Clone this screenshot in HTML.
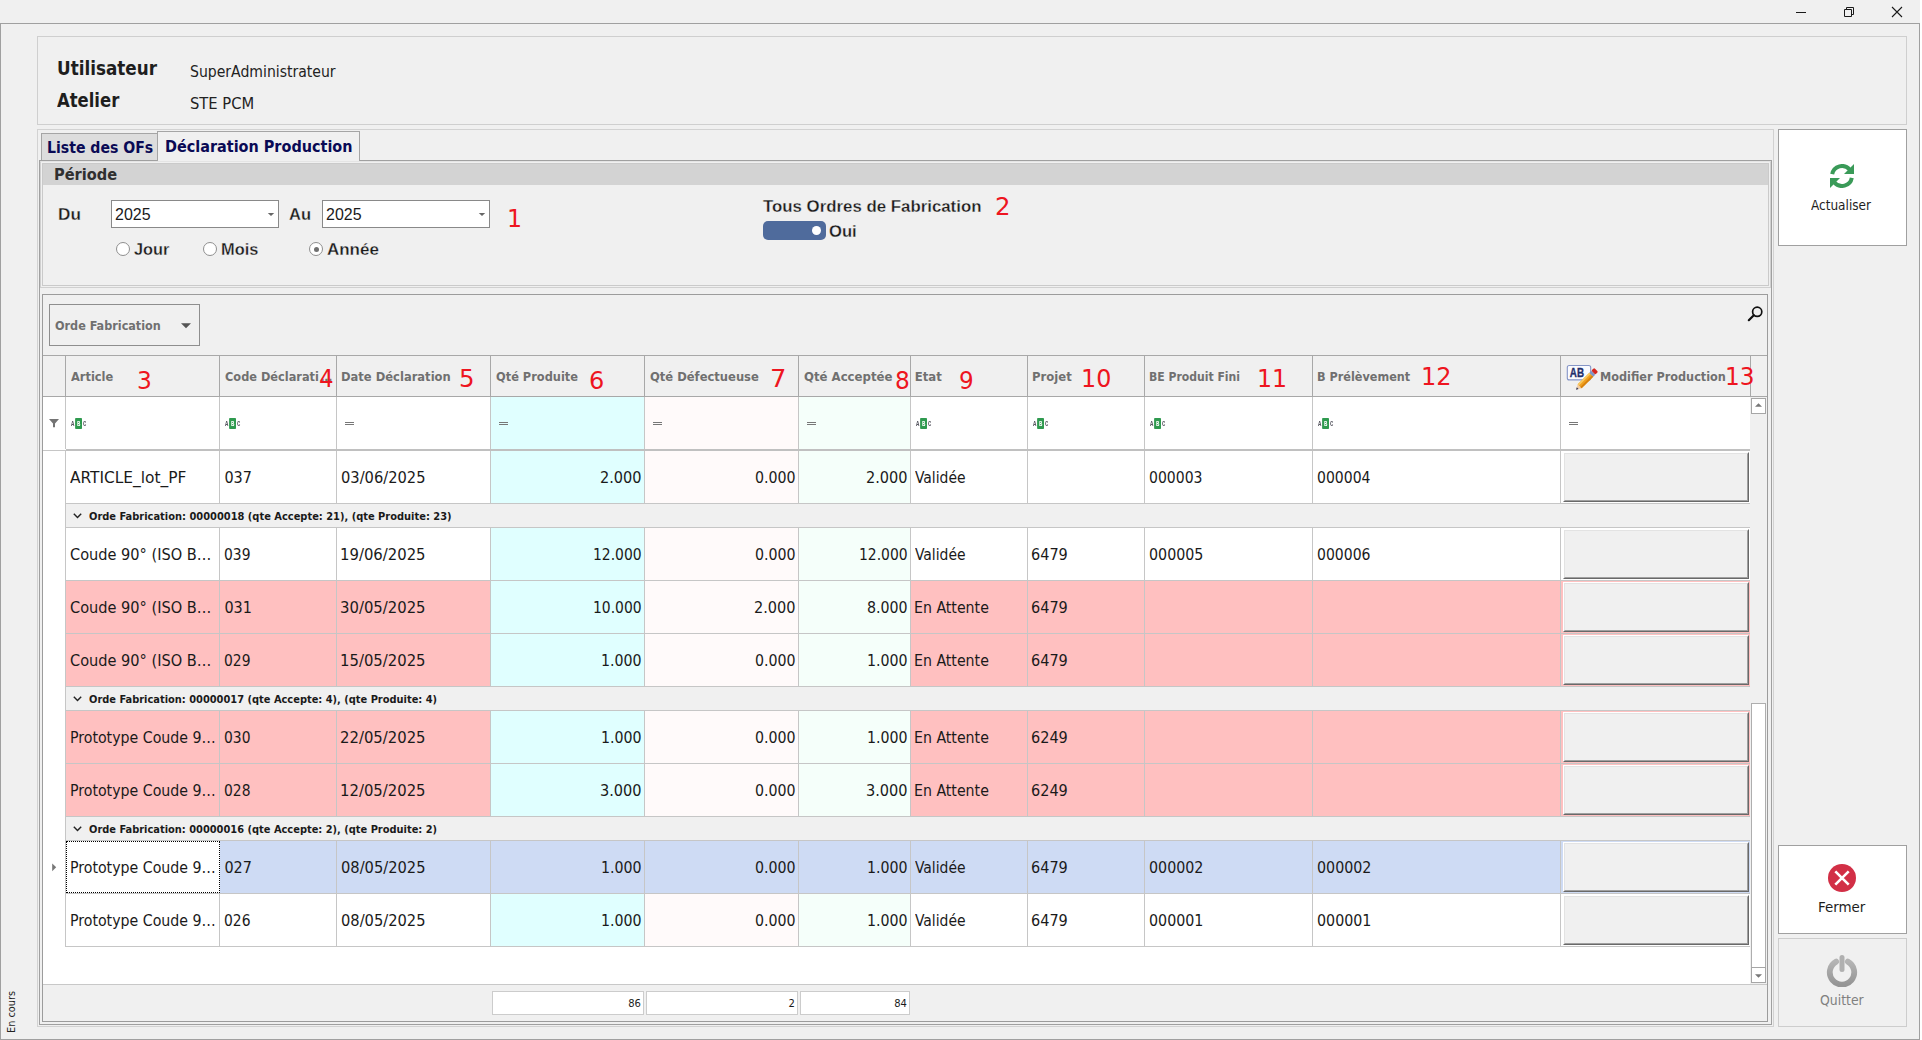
<!DOCTYPE html>
<html lang="fr"><head><meta charset="utf-8"><title>Déclaration Production</title>
<style>
html,body{margin:0;padding:0;background:#fff;}
body{width:1922px;height:1040px;position:relative;overflow:hidden;}
div,span.t,svg{position:absolute;box-sizing:border-box;}
span.t{white-space:pre;line-height:normal;transform-origin:0 0;font-weight:400;font-style:normal;}
span.h{font-family:'DejaVu Sans Condensed','DejaVu Sans',sans-serif;font-stretch:condensed;}
span.a{font-family:'Liberation Sans',sans-serif;}
span.d{font-family:'DejaVu Sans',sans-serif;}
</style></head>
<body>
<div style="left:0px;top:0px;width:1920px;height:1040px;background:#f0f0f0;"></div>
<div style="left:0px;top:23px;width:1920px;height:1px;background:#a0a0a0"></div>
<div style="left:0px;top:23px;width:1px;height:1017px;background:#a0a0a0"></div>
<div style="left:1919px;top:23px;width:1px;height:1017px;background:#a0a0a0"></div>
<div style="left:0px;top:1039px;width:1920px;height:1px;background:#a0a0a0"></div>
<svg style="left:1790px;top:0;width:130px;height:23px" viewBox="0 0 130 23"><path d="M6 12.5H16" stroke="#1a1a1a" stroke-width="1" fill="none"/><path d="M54.5 9.5H61.5V16.5H54.5Z M56.5 9.5V7.5H63.5V14.5H61.5" stroke="#1a1a1a" stroke-width="1" fill="none"/><path d="M102 7L112 17M112 7L102 17" stroke="#1a1a1a" stroke-width="1.1" fill="none"/></svg>
<div style="left:37px;top:36px;width:1870px;height:89px;border:1px solid #cfcfcf;"></div>
<span class="t h" style="left:56.53px;top:57.00px;font-size:19.2px;font-weight:700;color:#1e1e1e;transform:scaleX(0.9737);">Utilisateur</span>
<span class="t h" style="left:57.30px;top:89.00px;font-size:19.2px;font-weight:700;color:#1e1e1e;transform:scaleX(0.9520);">Atelier</span>
<span class="t h" style="left:190.00px;top:61.70px;font-size:16px;color:#222;transform:scaleX(0.9744);">SuperAdministrateur</span>
<span class="t h" style="left:190.00px;top:94.00px;font-size:16px;color:#222;transform:scaleX(1.0220);">STE PCM</span>
<div style="left:37px;top:129px;width:1737px;height:898px;border:1px solid #d2d2d2;"></div>
<div style="left:41px;top:133px;width:118px;height:28px;background:#dddddd;border:1px solid #a5a5a5;"></div>
<div style="left:39px;top:160px;width:1733px;height:865px;border:1px solid #a0a0a0;"></div>
<div style="left:157px;top:131px;width:203px;height:31px;background:#f0f0f0;border:1px solid #a5a5a5;border-bottom:none;"></div>
<span class="t h" style="left:47.04px;top:138.00px;font-size:16.3px;font-weight:700;color:#0a0a55;transform:scaleX(0.9608);">Liste des OFs</span>
<span class="t h" style="left:165.12px;top:137.00px;font-size:16.3px;font-weight:700;color:#0a0a55;transform:scaleX(0.9841);">Déclaration Production</span>
<div style="left:40px;top:161px;width:1731px;height:127px;border:1px solid #d0d0d0;border-top-color:#e4e4e4;"></div>
<div style="left:42px;top:163px;width:1727px;height:123px;border:1px solid #cacaca;"></div>
<div style="left:43px;top:164px;width:1725px;height:21px;background:#d3d3d3;"></div>
<span class="t h" style="left:53.60px;top:164.80px;font-size:16.3px;font-weight:700;color:#303030;transform:scaleX(0.9958);">Période</span>
<span class="t a" style="left:57.87px;top:205.00px;font-size:16.6px;font-weight:700;color:#1a1a1a;transform:scaleX(1.0341);-webkit-text-stroke:0.3px #f0f0f0;">Du</span>
<span class="t a" style="left:289.10px;top:205.00px;font-size:16.6px;font-weight:700;color:#1a1a1a;transform:scaleX(0.9962);-webkit-text-stroke:0.3px #f0f0f0;">Au</span>
<div style="left:111px;top:200px;width:168px;height:28px;background:#fff;border:1px solid #898989;"></div>
<span class="t a" style="left:114.90px;top:205.00px;font-size:16.4px;color:#1a1a1a;transform:scaleX(0.9739);">2025</span>
<svg style="left:267px;top:212px;width:8px;height:5px" viewBox="0 0 8 5"><path d="M0.8 0.9H7.2L4 4.1Z" fill="#666"/></svg>
<div style="left:322px;top:200px;width:168px;height:28px;background:#fff;border:1px solid #898989;"></div>
<span class="t a" style="left:325.90px;top:205.00px;font-size:16.4px;color:#1a1a1a;transform:scaleX(0.9739);">2025</span>
<svg style="left:478px;top:212px;width:8px;height:5px" viewBox="0 0 8 5"><path d="M0.8 0.9H7.2L4 4.1Z" fill="#666"/></svg>
<span class="t d" style="left:506.80px;top:204.00px;font-size:24.6px;color:#ee1520;transform:scaleX(0.9630);">1</span>
<div style="left:115.7px;top:242px;width:14px;height:14px;border-radius:50%;background:#fff;border:1px solid #8f8f8f"></div>
<span class="t a" style="left:133.70px;top:239.80px;font-size:16.6px;font-weight:700;color:#1a1a1a;transform:scaleX(0.9835);-webkit-text-stroke:0.3px #f0f0f0;">Jour</span>
<div style="left:203px;top:242px;width:14px;height:14px;border-radius:50%;background:#fff;border:1px solid #8f8f8f"></div>
<span class="t a" style="left:220.71px;top:239.80px;font-size:16.6px;font-weight:700;color:#1a1a1a;transform:scaleX(0.9872);-webkit-text-stroke:0.3px #f0f0f0;">Mois</span>
<div style="left:309px;top:242px;width:14px;height:14px;border-radius:50%;background:#fff;border:1px solid #8f8f8f"><div style="left:3.5px;top:3.5px;width:5px;height:5px;border-radius:50%;background:#707070"></div></div>
<span class="t a" style="left:327.20px;top:239.80px;font-size:16.6px;font-weight:700;color:#1a1a1a;transform:scaleX(1.0221);-webkit-text-stroke:0.3px #f0f0f0;">Année</span>
<span class="t a" style="left:762.60px;top:196.90px;font-size:16.6px;font-weight:700;color:#1a1a1a;transform:scaleX(1.0139);-webkit-text-stroke:0.3px #f0f0f0;">Tous Ordres de Fabrication</span>
<span class="t d" style="left:994.72px;top:192.00px;font-size:24.6px;color:#ee1520;transform:scaleX(0.9916);">2</span>
<div style="left:763px;top:221px;width:63px;height:19px;background:#4f6b9c;border-radius:5px;"><div style="left:48.5px;top:5px;width:9px;height:9px;border-radius:50%;background:#fff"></div></div>
<span class="t a" style="left:828.90px;top:221.60px;font-size:16.6px;font-weight:700;color:#1a1a1a;transform:scaleX(1.0021);-webkit-text-stroke:0.3px #f0f0f0;">Oui</span>
<div style="left:1778px;top:129px;width:129px;height:117px;background:#fff;border:1px solid #a0a0a0;"></div>
<svg style="left:1830px;top:164px;width:24px;height:24px" viewBox="0 0 24 24"><g fill="none" stroke="#3a9a58" stroke-width="4"><path d="M2.2 10.2A10 10 0 0 1 19.6 5.5"/><path d="M21.8 13.8A10 10 0 0 1 4.4 18.5"/></g><path d="M24 0V10H14Z" fill="#3a9a58"/><path d="M0 24V14H10Z" fill="#3a9a58"/></svg>
<span class="t h" style="left:1811.00px;top:196.80px;font-size:14.2px;color:#1e1e1e;transform:scaleX(0.9483);">Actualiser</span>
<div style="left:1778px;top:845px;width:129px;height:89px;background:#fff;border:1px solid #a0a0a0;"></div>
<svg style="left:1828px;top:864px;width:28px;height:28px" viewBox="0 0 28 28"><circle cx="14" cy="14" r="14" fill="#d22f46"/><path d="M7.3 7.3L20.7 20.7M20.7 7.3L7.3 20.7" stroke="#fff" stroke-width="2.6" fill="none"/></svg>
<span class="t h" style="left:1817.95px;top:898.90px;font-size:14.2px;color:#1e1e1e;transform:scaleX(1.0513);">Fermer</span>
<div style="left:1778px;top:938px;width:129px;height:89px;background:#f0f0f0;border:1px solid #cdcdcd;"></div>
<svg style="left:1826px;top:954px;width:32px;height:33px" viewBox="0 0 32 33"><defs><linearGradient id="pg" x1="0" y1="0" x2="0" y2="1"><stop offset="0" stop-color="#b4b4b4"/><stop offset="1" stop-color="#959595"/></linearGradient></defs><path d="M10.2 7.6A12.2 12.2 0 1 0 21.8 7.6" fill="none" stroke="url(#pg)" stroke-width="5.8" stroke-linecap="round"/><path d="M16 3.5V15.5" stroke="#b0b0b0" stroke-width="5" stroke-linecap="round" fill="none"/></svg>
<span class="t h" style="left:1820.20px;top:991.90px;font-size:14.2px;color:#808080;transform:scaleX(0.9749);">Quitter</span>
<span class="t h" style="left:15.10px;top:1023.20px;font-size:11.1px;color:#222;transform-origin:0 10.00px;transform:rotate(-90deg) scaleX(0.9750);">En cours</span>
<div style="left:42px;top:294px;width:1726px;height:728px;background:#f0f0f0;border:1px solid #9c9c9c;"></div>
<div style="left:49px;top:304px;width:151px;height:42px;background:#f0f0f0;border:1px solid #8e8e8e;"></div>
<span class="t h" style="left:55.10px;top:318.20px;font-size:13px;font-weight:700;color:#707070;transform:scaleX(0.9607);">Orde Fabrication</span>
<svg style="left:181px;top:323px;width:10px;height:6px" viewBox="0 0 10 6"><path d="M0 0.3H10L5 5.3Z" fill="#555"/></svg>
<svg style="left:1747px;top:305px;width:17px;height:17px" viewBox="0 0 17 17"><circle cx="10.2" cy="6.8" r="4.6" fill="none" stroke="#111" stroke-width="1.7"/><path d="M6.8 10.3L1.8 15.2" stroke="#111" stroke-width="2.2" stroke-linecap="round"/></svg>
<div style="left:43px;top:355px;width:1724px;height:1px;background:#a8a8a8"></div>
<div style="left:43px;top:396px;width:1724px;height:1px;background:#a8a8a8"></div>
<div style="left:65px;top:356px;width:1px;height:40px;background:#a8a8a8"></div>
<div style="left:219px;top:356px;width:1px;height:40px;background:#a8a8a8"></div>
<div style="left:336px;top:356px;width:1px;height:40px;background:#a8a8a8"></div>
<div style="left:490px;top:356px;width:1px;height:40px;background:#a8a8a8"></div>
<div style="left:644px;top:356px;width:1px;height:40px;background:#a8a8a8"></div>
<div style="left:798px;top:356px;width:1px;height:40px;background:#a8a8a8"></div>
<div style="left:910px;top:356px;width:1px;height:40px;background:#a8a8a8"></div>
<div style="left:1027px;top:356px;width:1px;height:40px;background:#a8a8a8"></div>
<div style="left:1144px;top:356px;width:1px;height:40px;background:#a8a8a8"></div>
<div style="left:1312px;top:356px;width:1px;height:40px;background:#a8a8a8"></div>
<div style="left:1560px;top:356px;width:1px;height:40px;background:#a8a8a8"></div>
<div style="left:1750px;top:356px;width:1px;height:40px;background:#a8a8a8"></div>
<span class="t h" style="left:70.90px;top:369.20px;font-size:13px;font-weight:700;color:#707070;transform:scaleX(0.9756);">Article</span>
<span class="t h" style="left:224.80px;top:369.20px;font-size:13px;font-weight:700;color:#707070;transform:scaleX(0.9708);">Code Déclarati</span>
<span class="t h" style="left:340.81px;top:369.20px;font-size:13px;font-weight:700;color:#707070;transform:scaleX(0.9858);">Date Déclaration</span>
<span class="t h" style="left:495.70px;top:369.20px;font-size:13px;font-weight:700;color:#707070;transform:scaleX(0.9749);">Qté Produite</span>
<span class="t h" style="left:650.10px;top:369.20px;font-size:13px;font-weight:700;color:#707070;transform:scaleX(0.9875);">Qté Défectueuse</span>
<span class="t h" style="left:803.70px;top:369.20px;font-size:13px;font-weight:700;color:#707070;transform:scaleX(1.0024);">Qté Acceptée</span>
<span class="t h" style="left:914.70px;top:369.20px;font-size:13px;font-weight:700;color:#707070;">Etat</span>
<span class="t h" style="left:1032.11px;top:369.20px;font-size:13px;font-weight:700;color:#707070;transform:scaleX(0.9945);">Projet</span>
<span class="t h" style="left:1149.17px;top:369.20px;font-size:13px;font-weight:700;color:#707070;transform:scaleX(0.9285);">BE Produit Fini</span>
<span class="t h" style="left:1317.14px;top:369.20px;font-size:13px;font-weight:700;color:#707070;transform:scaleX(0.9625);">B Prélèvement</span>
<span class="t h" style="left:1600.34px;top:369.20px;font-size:13px;font-weight:700;color:#707070;transform:scaleX(0.9648);">Modifier Production</span>
<span class="t h" style="left:320.60px;top:369.20px;font-size:13px;font-weight:700;color:#707070;">…</span>
<span class="t d" style="left:136.69px;top:366.00px;font-size:24.6px;color:#ee1520;transform:scaleX(0.9499);">3</span>
<span class="t d" style="left:319.08px;top:364.00px;font-size:24.6px;color:#ee1520;transform:scaleX(0.9316);">4</span>
<span class="t d" style="left:458.61px;top:364.00px;font-size:24.6px;color:#ee1520;transform:scaleX(0.9919);">5</span>
<span class="t d" style="left:588.84px;top:366.00px;font-size:24.6px;color:#ee1520;transform:scaleX(0.9763);">6</span>
<span class="t d" style="left:770.30px;top:364.00px;font-size:24.6px;color:#ee1520;transform:scaleX(1.0521);">7</span>
<span class="t d" style="left:894.89px;top:366.00px;font-size:24.6px;color:#ee1520;transform:scaleX(0.9439);">8</span>
<span class="t d" style="left:959.00px;top:366.00px;font-size:24.6px;color:#ee1520;transform:scaleX(0.9363);">9</span>
<span class="t d" style="left:1080.78px;top:364.00px;font-size:24.6px;color:#ee1520;transform:scaleX(0.9688);">10</span>
<span class="t d" style="left:1256.60px;top:364.00px;font-size:24.6px;color:#ee1520;transform:scaleX(0.9642);">11</span>
<span class="t d" style="left:1420.67px;top:362.00px;font-size:24.6px;color:#ee1520;transform:scaleX(0.9754);">12</span>
<span class="t d" style="left:1724.85px;top:362.00px;font-size:24.6px;color:#ee1520;transform:scaleX(0.9458);">13</span>
<svg style="left:1566px;top:364px;width:33px;height:27px" viewBox="0 0 33 27"><rect x="1.3" y="1.5" width="23.4" height="14.4" rx="2" fill="#fafbff" stroke="#8595c6" stroke-width="1.1"/><text x="3.8" y="13.1" font-family="Liberation Sans,sans-serif" font-weight="700" font-size="12.4" fill="#1f2f6b" stroke="#1f2f6b" stroke-width="0.35" textLength="14.2" lengthAdjust="spacingAndGlyphs">AB</text><g transform="translate(10.1 25.7) rotate(-44.7)"><path d="M0 0L5 -2.8V2.8Z" fill="#f1cda6"/><path d="M0 0L2.2 -1.25V1.25Z" fill="#27305a"/><rect x="5" y="-2.8" width="16.4" height="5.6" fill="#f0a020"/><rect x="5" y="-2.8" width="16.4" height="1.8" fill="#f9c960"/><rect x="5" y="1" width="16.4" height="1.8" fill="#d8820e"/><rect x="21.4" y="-2.8" width="2.8" height="5.6" fill="#7f95c4"/><rect x="24.2" y="-2.8" width="4" height="5.6" rx="1.2" fill="#d4261f"/></g></svg>
<div style="left:43px;top:397px;width:1707px;height:587px;background:#fff;"></div>
<div style="left:1750px;top:397px;width:17px;height:587px;background:#f0f0f0;"></div>
<div style="left:1751px;top:398px;width:15px;height:16px;background:#fff;border:1px solid #a6a6a6;"></div>
<svg style="left:1754px;top:402px;width:9px;height:6px" viewBox="0 0 9 6"><path d="M1 4.8H8L4.5 1.3Z" fill="#777"/></svg>
<div style="left:1751px;top:967px;width:15px;height:16px;background:#fff;border:1px solid #a6a6a6;"></div>
<svg style="left:1754px;top:973px;width:9px;height:6px" viewBox="0 0 9 6"><path d="M1 1.2H8L4.5 4.7Z" fill="#777"/></svg>
<div style="left:1751px;top:703px;width:15px;height:264px;background:#fff;border:1px solid #aeaeae;border-bottom:none;"></div>
<div style="left:491px;top:397px;width:153px;height:52px;background:#e0ffff;"></div>
<div style="left:645px;top:397px;width:153px;height:52px;background:#fffafa;"></div>
<div style="left:799px;top:397px;width:111px;height:52px;background:#f5fffa;"></div>
<div style="left:65px;top:397px;width:1px;height:52px;background:#c6c6c6"></div>
<div style="left:219px;top:397px;width:1px;height:52px;background:#c6c6c6"></div>
<div style="left:336px;top:397px;width:1px;height:52px;background:#c6c6c6"></div>
<div style="left:490px;top:397px;width:1px;height:52px;background:#c6c6c6"></div>
<div style="left:644px;top:397px;width:1px;height:52px;background:#c6c6c6"></div>
<div style="left:798px;top:397px;width:1px;height:52px;background:#c6c6c6"></div>
<div style="left:910px;top:397px;width:1px;height:52px;background:#c6c6c6"></div>
<div style="left:1027px;top:397px;width:1px;height:52px;background:#c6c6c6"></div>
<div style="left:1144px;top:397px;width:1px;height:52px;background:#c6c6c6"></div>
<div style="left:1312px;top:397px;width:1px;height:52px;background:#c6c6c6"></div>
<div style="left:1560px;top:397px;width:1px;height:52px;background:#c6c6c6"></div>
<div style="left:43px;top:450px;width:23px;height:1px;background:#c6c6c6"></div>
<div style="left:66px;top:449px;width:1684px;height:2px;background:#c0c0c0"></div>
<svg style="left:49px;top:419px;width:10px;height:9px" viewBox="0 0 10 9"><path d="M0 0H10L6 4.4V8.3H4V4.4Z" fill="#747474"/></svg>
<svg style="left:70px;top:418px;width:17px;height:11px;will-change:transform" viewBox="0 0 17 11"><rect x="5.1" y="0" width="6.9" height="11" rx="0.8" fill="#2f9a4f"/><g font-family="Liberation Mono,monospace" font-weight="700" font-size="7.6"><text x="0.9" y="8.3" fill="#55555f" textLength="3.3" lengthAdjust="spacingAndGlyphs">A</text><text x="6.9" y="8.3" fill="#fff" textLength="3.3" lengthAdjust="spacingAndGlyphs">B</text><text x="13" y="8.3" fill="#55555f" textLength="3.3" lengthAdjust="spacingAndGlyphs">C</text></g></svg>
<svg style="left:224px;top:418px;width:17px;height:11px;will-change:transform" viewBox="0 0 17 11"><rect x="5.1" y="0" width="6.9" height="11" rx="0.8" fill="#2f9a4f"/><g font-family="Liberation Mono,monospace" font-weight="700" font-size="7.6"><text x="0.9" y="8.3" fill="#55555f" textLength="3.3" lengthAdjust="spacingAndGlyphs">A</text><text x="6.9" y="8.3" fill="#fff" textLength="3.3" lengthAdjust="spacingAndGlyphs">B</text><text x="13" y="8.3" fill="#55555f" textLength="3.3" lengthAdjust="spacingAndGlyphs">C</text></g></svg>
<svg style="left:915px;top:418px;width:17px;height:11px;will-change:transform" viewBox="0 0 17 11"><rect x="5.1" y="0" width="6.9" height="11" rx="0.8" fill="#2f9a4f"/><g font-family="Liberation Mono,monospace" font-weight="700" font-size="7.6"><text x="0.9" y="8.3" fill="#55555f" textLength="3.3" lengthAdjust="spacingAndGlyphs">A</text><text x="6.9" y="8.3" fill="#fff" textLength="3.3" lengthAdjust="spacingAndGlyphs">B</text><text x="13" y="8.3" fill="#55555f" textLength="3.3" lengthAdjust="spacingAndGlyphs">C</text></g></svg>
<svg style="left:1032px;top:418px;width:17px;height:11px;will-change:transform" viewBox="0 0 17 11"><rect x="5.1" y="0" width="6.9" height="11" rx="0.8" fill="#2f9a4f"/><g font-family="Liberation Mono,monospace" font-weight="700" font-size="7.6"><text x="0.9" y="8.3" fill="#55555f" textLength="3.3" lengthAdjust="spacingAndGlyphs">A</text><text x="6.9" y="8.3" fill="#fff" textLength="3.3" lengthAdjust="spacingAndGlyphs">B</text><text x="13" y="8.3" fill="#55555f" textLength="3.3" lengthAdjust="spacingAndGlyphs">C</text></g></svg>
<svg style="left:1149px;top:418px;width:17px;height:11px;will-change:transform" viewBox="0 0 17 11"><rect x="5.1" y="0" width="6.9" height="11" rx="0.8" fill="#2f9a4f"/><g font-family="Liberation Mono,monospace" font-weight="700" font-size="7.6"><text x="0.9" y="8.3" fill="#55555f" textLength="3.3" lengthAdjust="spacingAndGlyphs">A</text><text x="6.9" y="8.3" fill="#fff" textLength="3.3" lengthAdjust="spacingAndGlyphs">B</text><text x="13" y="8.3" fill="#55555f" textLength="3.3" lengthAdjust="spacingAndGlyphs">C</text></g></svg>
<svg style="left:1317px;top:418px;width:17px;height:11px;will-change:transform" viewBox="0 0 17 11"><rect x="5.1" y="0" width="6.9" height="11" rx="0.8" fill="#2f9a4f"/><g font-family="Liberation Mono,monospace" font-weight="700" font-size="7.6"><text x="0.9" y="8.3" fill="#55555f" textLength="3.3" lengthAdjust="spacingAndGlyphs">A</text><text x="6.9" y="8.3" fill="#fff" textLength="3.3" lengthAdjust="spacingAndGlyphs">B</text><text x="13" y="8.3" fill="#55555f" textLength="3.3" lengthAdjust="spacingAndGlyphs">C</text></g></svg>
<div style="left:345px;top:422px;width:9px;height:3px;border-top:1px solid #777;border-bottom:1px solid #777"></div>
<div style="left:499px;top:422px;width:9px;height:3px;border-top:1px solid #777;border-bottom:1px solid #777"></div>
<div style="left:653px;top:422px;width:9px;height:3px;border-top:1px solid #777;border-bottom:1px solid #777"></div>
<div style="left:807px;top:422px;width:9px;height:3px;border-top:1px solid #777;border-bottom:1px solid #777"></div>
<div style="left:1569px;top:422px;width:9px;height:3px;border-top:1px solid #777;border-bottom:1px solid #777"></div>
<div style="left:491px;top:451px;width:153px;height:52px;background:#e0ffff;"></div>
<div style="left:645px;top:451px;width:153px;height:52px;background:#fffafa;"></div>
<div style="left:799px;top:451px;width:111px;height:52px;background:#f5fffa;"></div>
<div style="left:65px;top:451px;width:1px;height:52px;background:#c6c6c6"></div>
<div style="left:219px;top:451px;width:1px;height:52px;background:#c6c6c6"></div>
<div style="left:336px;top:451px;width:1px;height:52px;background:#c6c6c6"></div>
<div style="left:490px;top:451px;width:1px;height:52px;background:#c6c6c6"></div>
<div style="left:644px;top:451px;width:1px;height:52px;background:#c6c6c6"></div>
<div style="left:798px;top:451px;width:1px;height:52px;background:#c6c6c6"></div>
<div style="left:910px;top:451px;width:1px;height:52px;background:#c6c6c6"></div>
<div style="left:1027px;top:451px;width:1px;height:52px;background:#c6c6c6"></div>
<div style="left:1144px;top:451px;width:1px;height:52px;background:#c6c6c6"></div>
<div style="left:1312px;top:451px;width:1px;height:52px;background:#c6c6c6"></div>
<div style="left:1560px;top:451px;width:1px;height:52px;background:#c6c6c6"></div>
<div style="left:65px;top:503px;width:1685px;height:1px;background:#c6c6c6"></div>
<span class="t h" style="left:70.40px;top:468.00px;font-size:16px;color:#1a1a1a;transform:scaleX(1.0702);">ARTICLE_lot_PF</span>
<span class="t h" style="left:224.40px;top:468.00px;font-size:16px;color:#1a1a1a;">037</span>
<span class="t h" style="left:341.40px;top:468.00px;font-size:16px;color:#1a1a1a;transform:scaleX(1.0184);">03/06/2025</span>
<span class="t h" style="left:599.69px;top:468.00px;font-size:16px;color:#1a1a1a;transform:scaleX(1.0090);">2.000</span>
<span class="t h" style="left:754.70px;top:468.00px;font-size:16px;color:#1a1a1a;transform:scaleX(0.9844);">0.000</span>
<span class="t h" style="left:865.69px;top:468.00px;font-size:16px;color:#1a1a1a;transform:scaleX(1.0090);">2.000</span>
<span class="t h" style="left:915.40px;top:468.00px;font-size:16px;color:#1a1a1a;transform:scaleX(0.9672);">Validée</span>
<span class="t h" style="left:1149.40px;top:468.00px;font-size:16px;color:#1a1a1a;transform:scaleX(0.9730);">000003</span>
<span class="t h" style="left:1317.40px;top:468.00px;font-size:16px;color:#1a1a1a;transform:scaleX(0.9730);">000004</span>
<div style="left:1563px;top:452px;width:186px;height:50px;background:#f0f0f0;border-top:1px solid #fff;border-left:1px solid #fff;border-right:1px solid #696969;border-bottom:1px solid #696969;"><div style="left:0;top:0;width:184px;height:48px;border-top:1px solid #e3e3e3;border-left:1px solid #e3e3e3;border-right:1px solid #a0a0a0;border-bottom:1px solid #a0a0a0"></div></div>
<div style="left:66px;top:504px;width:1684px;height:23px;background:#f0f0f0;"></div>
<div style="left:66px;top:527px;width:1684px;height:1px;background:#c6c6c6"></div>
<svg style="left:73px;top:513px;width:9px;height:6px" viewBox="0 0 9 6"><path d="M0.8 0.8L4.5 4.6L8.2 0.8" fill="none" stroke="#222" stroke-width="1.4"/></svg>
<span class="t h" style="left:88.90px;top:510.00px;font-size:10.9px;font-weight:700;color:#1a1a1a;transform:scaleX(1.0082);">Orde Fabrication: 00000018 (qte Accepte: 21), (qte Produite: 23)</span>
<div style="left:491px;top:528px;width:153px;height:52px;background:#e0ffff;"></div>
<div style="left:645px;top:528px;width:153px;height:52px;background:#fffafa;"></div>
<div style="left:799px;top:528px;width:111px;height:52px;background:#f5fffa;"></div>
<div style="left:65px;top:528px;width:1px;height:52px;background:#c6c6c6"></div>
<div style="left:219px;top:528px;width:1px;height:52px;background:#c6c6c6"></div>
<div style="left:336px;top:528px;width:1px;height:52px;background:#c6c6c6"></div>
<div style="left:490px;top:528px;width:1px;height:52px;background:#c6c6c6"></div>
<div style="left:644px;top:528px;width:1px;height:52px;background:#c6c6c6"></div>
<div style="left:798px;top:528px;width:1px;height:52px;background:#c6c6c6"></div>
<div style="left:910px;top:528px;width:1px;height:52px;background:#c6c6c6"></div>
<div style="left:1027px;top:528px;width:1px;height:52px;background:#c6c6c6"></div>
<div style="left:1144px;top:528px;width:1px;height:52px;background:#c6c6c6"></div>
<div style="left:1312px;top:528px;width:1px;height:52px;background:#c6c6c6"></div>
<div style="left:1560px;top:528px;width:1px;height:52px;background:#c6c6c6"></div>
<div style="left:65px;top:580px;width:1685px;height:1px;background:#c6c6c6"></div>
<span class="t h" style="left:70.40px;top:545.00px;font-size:16px;color:#1a1a1a;transform:scaleX(1.0108);">Coude 90° (ISO B…</span>
<span class="t h" style="left:224.40px;top:545.00px;font-size:16px;color:#1a1a1a;transform:scaleX(0.9629);">039</span>
<span class="t h" style="left:340.37px;top:545.00px;font-size:16px;color:#1a1a1a;transform:scaleX(1.0310);">19/06/2025</span>
<span class="t h" style="left:592.63px;top:545.00px;font-size:16px;color:#1a1a1a;transform:scaleX(0.9655);">12.000</span>
<span class="t h" style="left:754.70px;top:545.00px;font-size:16px;color:#1a1a1a;transform:scaleX(0.9844);">0.000</span>
<span class="t h" style="left:858.63px;top:545.00px;font-size:16px;color:#1a1a1a;transform:scaleX(0.9655);">12.000</span>
<span class="t h" style="left:915.40px;top:545.00px;font-size:16px;color:#1a1a1a;transform:scaleX(0.9672);">Validée</span>
<span class="t h" style="left:1031.40px;top:545.00px;font-size:16px;color:#1a1a1a;transform:scaleX(1.0037);">6479</span>
<span class="t h" style="left:1149.40px;top:545.00px;font-size:16px;color:#1a1a1a;transform:scaleX(0.9911);">000005</span>
<span class="t h" style="left:1317.40px;top:545.00px;font-size:16px;color:#1a1a1a;transform:scaleX(0.9730);">000006</span>
<div style="left:1563px;top:529px;width:186px;height:50px;background:#f0f0f0;border-top:1px solid #fff;border-left:1px solid #fff;border-right:1px solid #696969;border-bottom:1px solid #696969;"><div style="left:0;top:0;width:184px;height:48px;border-top:1px solid #e3e3e3;border-left:1px solid #e3e3e3;border-right:1px solid #a0a0a0;border-bottom:1px solid #a0a0a0"></div></div>
<div style="left:66px;top:581px;width:153px;height:52px;background:#ffc0c0;"></div>
<div style="left:220px;top:581px;width:116px;height:52px;background:#ffc0c0;"></div>
<div style="left:337px;top:581px;width:153px;height:52px;background:#ffc0c0;"></div>
<div style="left:491px;top:581px;width:153px;height:52px;background:#e0ffff;"></div>
<div style="left:645px;top:581px;width:153px;height:52px;background:#fffafa;"></div>
<div style="left:799px;top:581px;width:111px;height:52px;background:#f5fffa;"></div>
<div style="left:911px;top:581px;width:116px;height:52px;background:#ffc0c0;"></div>
<div style="left:1028px;top:581px;width:116px;height:52px;background:#ffc0c0;"></div>
<div style="left:1145px;top:581px;width:167px;height:52px;background:#ffc0c0;"></div>
<div style="left:1313px;top:581px;width:247px;height:52px;background:#ffc0c0;"></div>
<div style="left:1561px;top:581px;width:189px;height:52px;background:#ffc0c0;"></div>
<div style="left:65px;top:581px;width:1px;height:52px;background:#c6c6c6"></div>
<div style="left:219px;top:581px;width:1px;height:52px;background:#c6c6c6"></div>
<div style="left:336px;top:581px;width:1px;height:52px;background:#c6c6c6"></div>
<div style="left:490px;top:581px;width:1px;height:52px;background:#c6c6c6"></div>
<div style="left:644px;top:581px;width:1px;height:52px;background:#c6c6c6"></div>
<div style="left:798px;top:581px;width:1px;height:52px;background:#c6c6c6"></div>
<div style="left:910px;top:581px;width:1px;height:52px;background:#c6c6c6"></div>
<div style="left:1027px;top:581px;width:1px;height:52px;background:#c6c6c6"></div>
<div style="left:1144px;top:581px;width:1px;height:52px;background:#c6c6c6"></div>
<div style="left:1312px;top:581px;width:1px;height:52px;background:#c6c6c6"></div>
<div style="left:1560px;top:581px;width:1px;height:52px;background:#c6c6c6"></div>
<div style="left:65px;top:633px;width:1685px;height:1px;background:#c6c6c6"></div>
<span class="t h" style="left:70.40px;top:598.00px;font-size:16px;color:#1a1a1a;transform:scaleX(1.0108);">Coude 90° (ISO B…</span>
<span class="t h" style="left:224.40px;top:598.00px;font-size:16px;color:#1a1a1a;">031</span>
<span class="t h" style="left:340.37px;top:598.00px;font-size:16px;color:#1a1a1a;transform:scaleX(1.0310);">30/05/2025</span>
<span class="t h" style="left:592.63px;top:598.00px;font-size:16px;color:#1a1a1a;transform:scaleX(0.9655);">10.000</span>
<span class="t h" style="left:753.69px;top:598.00px;font-size:16px;color:#1a1a1a;transform:scaleX(1.0090);">2.000</span>
<span class="t h" style="left:866.70px;top:598.00px;font-size:16px;color:#1a1a1a;transform:scaleX(0.9844);">8.000</span>
<span class="t h" style="left:914.42px;top:598.00px;font-size:16px;color:#1a1a1a;transform:scaleX(0.9833);">En Attente</span>
<span class="t h" style="left:1031.40px;top:598.00px;font-size:16px;color:#1a1a1a;transform:scaleX(1.0037);">6479</span>
<div style="left:1563px;top:582px;width:186px;height:50px;background:#f0f0f0;border-top:1px solid #fff;border-left:1px solid #fff;border-right:1px solid #696969;border-bottom:1px solid #696969;"><div style="left:0;top:0;width:184px;height:48px;border-top:1px solid #e3e3e3;border-left:1px solid #e3e3e3;border-right:1px solid #a0a0a0;border-bottom:1px solid #a0a0a0"></div></div>
<div style="left:66px;top:634px;width:153px;height:52px;background:#ffc0c0;"></div>
<div style="left:220px;top:634px;width:116px;height:52px;background:#ffc0c0;"></div>
<div style="left:337px;top:634px;width:153px;height:52px;background:#ffc0c0;"></div>
<div style="left:491px;top:634px;width:153px;height:52px;background:#e0ffff;"></div>
<div style="left:645px;top:634px;width:153px;height:52px;background:#fffafa;"></div>
<div style="left:799px;top:634px;width:111px;height:52px;background:#f5fffa;"></div>
<div style="left:911px;top:634px;width:116px;height:52px;background:#ffc0c0;"></div>
<div style="left:1028px;top:634px;width:116px;height:52px;background:#ffc0c0;"></div>
<div style="left:1145px;top:634px;width:167px;height:52px;background:#ffc0c0;"></div>
<div style="left:1313px;top:634px;width:247px;height:52px;background:#ffc0c0;"></div>
<div style="left:1561px;top:634px;width:189px;height:52px;background:#ffc0c0;"></div>
<div style="left:65px;top:634px;width:1px;height:52px;background:#c6c6c6"></div>
<div style="left:219px;top:634px;width:1px;height:52px;background:#c6c6c6"></div>
<div style="left:336px;top:634px;width:1px;height:52px;background:#c6c6c6"></div>
<div style="left:490px;top:634px;width:1px;height:52px;background:#c6c6c6"></div>
<div style="left:644px;top:634px;width:1px;height:52px;background:#c6c6c6"></div>
<div style="left:798px;top:634px;width:1px;height:52px;background:#c6c6c6"></div>
<div style="left:910px;top:634px;width:1px;height:52px;background:#c6c6c6"></div>
<div style="left:1027px;top:634px;width:1px;height:52px;background:#c6c6c6"></div>
<div style="left:1144px;top:634px;width:1px;height:52px;background:#c6c6c6"></div>
<div style="left:1312px;top:634px;width:1px;height:52px;background:#c6c6c6"></div>
<div style="left:1560px;top:634px;width:1px;height:52px;background:#c6c6c6"></div>
<div style="left:65px;top:686px;width:1685px;height:1px;background:#c6c6c6"></div>
<span class="t h" style="left:70.40px;top:651.00px;font-size:16px;color:#1a1a1a;transform:scaleX(1.0108);">Coude 90° (ISO B…</span>
<span class="t h" style="left:224.40px;top:651.00px;font-size:16px;color:#1a1a1a;transform:scaleX(0.9629);">029</span>
<span class="t h" style="left:340.37px;top:651.00px;font-size:16px;color:#1a1a1a;transform:scaleX(1.0310);">15/05/2025</span>
<span class="t h" style="left:600.72px;top:651.00px;font-size:16px;color:#1a1a1a;transform:scaleX(0.9840);">1.000</span>
<span class="t h" style="left:754.70px;top:651.00px;font-size:16px;color:#1a1a1a;transform:scaleX(0.9844);">0.000</span>
<span class="t h" style="left:866.72px;top:651.00px;font-size:16px;color:#1a1a1a;transform:scaleX(0.9840);">1.000</span>
<span class="t h" style="left:914.42px;top:651.00px;font-size:16px;color:#1a1a1a;transform:scaleX(0.9833);">En Attente</span>
<span class="t h" style="left:1031.40px;top:651.00px;font-size:16px;color:#1a1a1a;transform:scaleX(1.0037);">6479</span>
<div style="left:1563px;top:635px;width:186px;height:50px;background:#f0f0f0;border-top:1px solid #fff;border-left:1px solid #fff;border-right:1px solid #696969;border-bottom:1px solid #696969;"><div style="left:0;top:0;width:184px;height:48px;border-top:1px solid #e3e3e3;border-left:1px solid #e3e3e3;border-right:1px solid #a0a0a0;border-bottom:1px solid #a0a0a0"></div></div>
<div style="left:66px;top:687px;width:1684px;height:23px;background:#f0f0f0;"></div>
<div style="left:66px;top:710px;width:1684px;height:1px;background:#c6c6c6"></div>
<svg style="left:73px;top:696px;width:9px;height:6px" viewBox="0 0 9 6"><path d="M0.8 0.8L4.5 4.6L8.2 0.8" fill="none" stroke="#222" stroke-width="1.4"/></svg>
<span class="t h" style="left:88.90px;top:693.00px;font-size:10.9px;font-weight:700;color:#1a1a1a;transform:scaleX(1.0060);">Orde Fabrication: 00000017 (qte Accepte: 4), (qte Produite: 4)</span>
<div style="left:66px;top:711px;width:153px;height:52px;background:#ffc0c0;"></div>
<div style="left:220px;top:711px;width:116px;height:52px;background:#ffc0c0;"></div>
<div style="left:337px;top:711px;width:153px;height:52px;background:#ffc0c0;"></div>
<div style="left:491px;top:711px;width:153px;height:52px;background:#e0ffff;"></div>
<div style="left:645px;top:711px;width:153px;height:52px;background:#fffafa;"></div>
<div style="left:799px;top:711px;width:111px;height:52px;background:#f5fffa;"></div>
<div style="left:911px;top:711px;width:116px;height:52px;background:#ffc0c0;"></div>
<div style="left:1028px;top:711px;width:116px;height:52px;background:#ffc0c0;"></div>
<div style="left:1145px;top:711px;width:167px;height:52px;background:#ffc0c0;"></div>
<div style="left:1313px;top:711px;width:247px;height:52px;background:#ffc0c0;"></div>
<div style="left:1561px;top:711px;width:189px;height:52px;background:#ffc0c0;"></div>
<div style="left:65px;top:711px;width:1px;height:52px;background:#c6c6c6"></div>
<div style="left:219px;top:711px;width:1px;height:52px;background:#c6c6c6"></div>
<div style="left:336px;top:711px;width:1px;height:52px;background:#c6c6c6"></div>
<div style="left:490px;top:711px;width:1px;height:52px;background:#c6c6c6"></div>
<div style="left:644px;top:711px;width:1px;height:52px;background:#c6c6c6"></div>
<div style="left:798px;top:711px;width:1px;height:52px;background:#c6c6c6"></div>
<div style="left:910px;top:711px;width:1px;height:52px;background:#c6c6c6"></div>
<div style="left:1027px;top:711px;width:1px;height:52px;background:#c6c6c6"></div>
<div style="left:1144px;top:711px;width:1px;height:52px;background:#c6c6c6"></div>
<div style="left:1312px;top:711px;width:1px;height:52px;background:#c6c6c6"></div>
<div style="left:1560px;top:711px;width:1px;height:52px;background:#c6c6c6"></div>
<div style="left:65px;top:763px;width:1685px;height:1px;background:#c6c6c6"></div>
<span class="t h" style="left:70.22px;top:728.00px;font-size:16px;color:#1a1a1a;transform:scaleX(0.9839);">Prototype Coude 9…</span>
<span class="t h" style="left:224.40px;top:728.00px;font-size:16px;color:#1a1a1a;transform:scaleX(0.9629);">030</span>
<span class="t h" style="left:340.37px;top:728.00px;font-size:16px;color:#1a1a1a;transform:scaleX(1.0310);">22/05/2025</span>
<span class="t h" style="left:600.72px;top:728.00px;font-size:16px;color:#1a1a1a;transform:scaleX(0.9840);">1.000</span>
<span class="t h" style="left:754.70px;top:728.00px;font-size:16px;color:#1a1a1a;transform:scaleX(0.9844);">0.000</span>
<span class="t h" style="left:866.72px;top:728.00px;font-size:16px;color:#1a1a1a;transform:scaleX(0.9840);">1.000</span>
<span class="t h" style="left:914.42px;top:728.00px;font-size:16px;color:#1a1a1a;transform:scaleX(0.9833);">En Attente</span>
<span class="t h" style="left:1031.40px;top:728.00px;font-size:16px;color:#1a1a1a;transform:scaleX(1.0037);">6249</span>
<div style="left:1563px;top:712px;width:186px;height:50px;background:#f0f0f0;border-top:1px solid #fff;border-left:1px solid #fff;border-right:1px solid #696969;border-bottom:1px solid #696969;"><div style="left:0;top:0;width:184px;height:48px;border-top:1px solid #e3e3e3;border-left:1px solid #e3e3e3;border-right:1px solid #a0a0a0;border-bottom:1px solid #a0a0a0"></div></div>
<div style="left:66px;top:764px;width:153px;height:52px;background:#ffc0c0;"></div>
<div style="left:220px;top:764px;width:116px;height:52px;background:#ffc0c0;"></div>
<div style="left:337px;top:764px;width:153px;height:52px;background:#ffc0c0;"></div>
<div style="left:491px;top:764px;width:153px;height:52px;background:#e0ffff;"></div>
<div style="left:645px;top:764px;width:153px;height:52px;background:#fffafa;"></div>
<div style="left:799px;top:764px;width:111px;height:52px;background:#f5fffa;"></div>
<div style="left:911px;top:764px;width:116px;height:52px;background:#ffc0c0;"></div>
<div style="left:1028px;top:764px;width:116px;height:52px;background:#ffc0c0;"></div>
<div style="left:1145px;top:764px;width:167px;height:52px;background:#ffc0c0;"></div>
<div style="left:1313px;top:764px;width:247px;height:52px;background:#ffc0c0;"></div>
<div style="left:1561px;top:764px;width:189px;height:52px;background:#ffc0c0;"></div>
<div style="left:65px;top:764px;width:1px;height:52px;background:#c6c6c6"></div>
<div style="left:219px;top:764px;width:1px;height:52px;background:#c6c6c6"></div>
<div style="left:336px;top:764px;width:1px;height:52px;background:#c6c6c6"></div>
<div style="left:490px;top:764px;width:1px;height:52px;background:#c6c6c6"></div>
<div style="left:644px;top:764px;width:1px;height:52px;background:#c6c6c6"></div>
<div style="left:798px;top:764px;width:1px;height:52px;background:#c6c6c6"></div>
<div style="left:910px;top:764px;width:1px;height:52px;background:#c6c6c6"></div>
<div style="left:1027px;top:764px;width:1px;height:52px;background:#c6c6c6"></div>
<div style="left:1144px;top:764px;width:1px;height:52px;background:#c6c6c6"></div>
<div style="left:1312px;top:764px;width:1px;height:52px;background:#c6c6c6"></div>
<div style="left:1560px;top:764px;width:1px;height:52px;background:#c6c6c6"></div>
<div style="left:65px;top:816px;width:1685px;height:1px;background:#c6c6c6"></div>
<span class="t h" style="left:70.22px;top:781.00px;font-size:16px;color:#1a1a1a;transform:scaleX(0.9839);">Prototype Coude 9…</span>
<span class="t h" style="left:224.40px;top:781.00px;font-size:16px;color:#1a1a1a;transform:scaleX(0.9629);">028</span>
<span class="t h" style="left:340.37px;top:781.00px;font-size:16px;color:#1a1a1a;transform:scaleX(1.0310);">12/05/2025</span>
<span class="t h" style="left:599.69px;top:781.00px;font-size:16px;color:#1a1a1a;transform:scaleX(1.0090);">3.000</span>
<span class="t h" style="left:754.70px;top:781.00px;font-size:16px;color:#1a1a1a;transform:scaleX(0.9844);">0.000</span>
<span class="t h" style="left:865.69px;top:781.00px;font-size:16px;color:#1a1a1a;transform:scaleX(1.0090);">3.000</span>
<span class="t h" style="left:914.42px;top:781.00px;font-size:16px;color:#1a1a1a;transform:scaleX(0.9833);">En Attente</span>
<span class="t h" style="left:1031.40px;top:781.00px;font-size:16px;color:#1a1a1a;transform:scaleX(1.0037);">6249</span>
<div style="left:1563px;top:765px;width:186px;height:50px;background:#f0f0f0;border-top:1px solid #fff;border-left:1px solid #fff;border-right:1px solid #696969;border-bottom:1px solid #696969;"><div style="left:0;top:0;width:184px;height:48px;border-top:1px solid #e3e3e3;border-left:1px solid #e3e3e3;border-right:1px solid #a0a0a0;border-bottom:1px solid #a0a0a0"></div></div>
<div style="left:66px;top:817px;width:1684px;height:23px;background:#f0f0f0;"></div>
<div style="left:66px;top:840px;width:1684px;height:1px;background:#c6c6c6"></div>
<svg style="left:73px;top:826px;width:9px;height:6px" viewBox="0 0 9 6"><path d="M0.8 0.8L4.5 4.6L8.2 0.8" fill="none" stroke="#222" stroke-width="1.4"/></svg>
<span class="t h" style="left:88.90px;top:823.00px;font-size:10.9px;font-weight:700;color:#1a1a1a;transform:scaleX(1.0060);">Orde Fabrication: 00000016 (qte Accepte: 2), (qte Produite: 2)</span>
<div style="left:66px;top:841px;width:153px;height:52px;background:#cedbf4;"></div>
<div style="left:220px;top:841px;width:116px;height:52px;background:#cedbf4;"></div>
<div style="left:337px;top:841px;width:153px;height:52px;background:#cedbf4;"></div>
<div style="left:491px;top:841px;width:153px;height:52px;background:#cedbf4;"></div>
<div style="left:645px;top:841px;width:153px;height:52px;background:#cedbf4;"></div>
<div style="left:799px;top:841px;width:111px;height:52px;background:#cedbf4;"></div>
<div style="left:911px;top:841px;width:116px;height:52px;background:#cedbf4;"></div>
<div style="left:1028px;top:841px;width:116px;height:52px;background:#cedbf4;"></div>
<div style="left:1145px;top:841px;width:167px;height:52px;background:#cedbf4;"></div>
<div style="left:1313px;top:841px;width:247px;height:52px;background:#cedbf4;"></div>
<div style="left:1561px;top:841px;width:189px;height:52px;background:#cedbf4;"></div>
<div style="left:65px;top:841px;width:1px;height:52px;background:#c6c6c6"></div>
<div style="left:219px;top:841px;width:1px;height:52px;background:#c6c6c6"></div>
<div style="left:336px;top:841px;width:1px;height:52px;background:#c6c6c6"></div>
<div style="left:490px;top:841px;width:1px;height:52px;background:#c6c6c6"></div>
<div style="left:644px;top:841px;width:1px;height:52px;background:#c6c6c6"></div>
<div style="left:798px;top:841px;width:1px;height:52px;background:#c6c6c6"></div>
<div style="left:910px;top:841px;width:1px;height:52px;background:#c6c6c6"></div>
<div style="left:1027px;top:841px;width:1px;height:52px;background:#c6c6c6"></div>
<div style="left:1144px;top:841px;width:1px;height:52px;background:#c6c6c6"></div>
<div style="left:1312px;top:841px;width:1px;height:52px;background:#c6c6c6"></div>
<div style="left:1560px;top:841px;width:1px;height:52px;background:#c6c6c6"></div>
<div style="left:65px;top:893px;width:1685px;height:1px;background:#c6c6c6"></div>
<div style="left:66px;top:841px;width:154px;height:52px;background:#fff;border:1px dotted #000;"></div>
<svg style="left:52px;top:863px;width:5px;height:9px" viewBox="0 0 5 9"><path d="M0.2 0.4L4.2 4.3L0.2 8.2Z" fill="#777"/></svg>
<span class="t h" style="left:70.22px;top:858.00px;font-size:16px;color:#1a1a1a;transform:scaleX(0.9839);">Prototype Coude 9…</span>
<span class="t h" style="left:224.40px;top:858.00px;font-size:16px;color:#1a1a1a;">027</span>
<span class="t h" style="left:341.40px;top:858.00px;font-size:16px;color:#1a1a1a;transform:scaleX(1.0184);">08/05/2025</span>
<span class="t h" style="left:600.72px;top:858.00px;font-size:16px;color:#1a1a1a;transform:scaleX(0.9840);">1.000</span>
<span class="t h" style="left:754.70px;top:858.00px;font-size:16px;color:#1a1a1a;transform:scaleX(0.9844);">0.000</span>
<span class="t h" style="left:866.72px;top:858.00px;font-size:16px;color:#1a1a1a;transform:scaleX(0.9840);">1.000</span>
<span class="t h" style="left:915.40px;top:858.00px;font-size:16px;color:#1a1a1a;transform:scaleX(0.9672);">Validée</span>
<span class="t h" style="left:1031.40px;top:858.00px;font-size:16px;color:#1a1a1a;transform:scaleX(1.0037);">6479</span>
<span class="t h" style="left:1149.40px;top:858.00px;font-size:16px;color:#1a1a1a;transform:scaleX(0.9911);">000002</span>
<span class="t h" style="left:1317.40px;top:858.00px;font-size:16px;color:#1a1a1a;transform:scaleX(0.9911);">000002</span>
<div style="left:1563px;top:842px;width:186px;height:50px;background:#f0f0f0;border-top:1px solid #fff;border-left:1px solid #fff;border-right:1px solid #696969;border-bottom:1px solid #696969;"><div style="left:0;top:0;width:184px;height:48px;border-top:1px solid #e3e3e3;border-left:1px solid #e3e3e3;border-right:1px solid #a0a0a0;border-bottom:1px solid #a0a0a0"></div></div>
<div style="left:491px;top:894px;width:153px;height:52px;background:#e0ffff;"></div>
<div style="left:645px;top:894px;width:153px;height:52px;background:#fffafa;"></div>
<div style="left:799px;top:894px;width:111px;height:52px;background:#f5fffa;"></div>
<div style="left:65px;top:894px;width:1px;height:52px;background:#c6c6c6"></div>
<div style="left:219px;top:894px;width:1px;height:52px;background:#c6c6c6"></div>
<div style="left:336px;top:894px;width:1px;height:52px;background:#c6c6c6"></div>
<div style="left:490px;top:894px;width:1px;height:52px;background:#c6c6c6"></div>
<div style="left:644px;top:894px;width:1px;height:52px;background:#c6c6c6"></div>
<div style="left:798px;top:894px;width:1px;height:52px;background:#c6c6c6"></div>
<div style="left:910px;top:894px;width:1px;height:52px;background:#c6c6c6"></div>
<div style="left:1027px;top:894px;width:1px;height:52px;background:#c6c6c6"></div>
<div style="left:1144px;top:894px;width:1px;height:52px;background:#c6c6c6"></div>
<div style="left:1312px;top:894px;width:1px;height:52px;background:#c6c6c6"></div>
<div style="left:1560px;top:894px;width:1px;height:52px;background:#c6c6c6"></div>
<div style="left:65px;top:946px;width:1685px;height:1px;background:#c6c6c6"></div>
<span class="t h" style="left:70.22px;top:911.00px;font-size:16px;color:#1a1a1a;transform:scaleX(0.9839);">Prototype Coude 9…</span>
<span class="t h" style="left:224.40px;top:911.00px;font-size:16px;color:#1a1a1a;transform:scaleX(0.9629);">026</span>
<span class="t h" style="left:341.40px;top:911.00px;font-size:16px;color:#1a1a1a;transform:scaleX(1.0184);">08/05/2025</span>
<span class="t h" style="left:600.72px;top:911.00px;font-size:16px;color:#1a1a1a;transform:scaleX(0.9840);">1.000</span>
<span class="t h" style="left:754.70px;top:911.00px;font-size:16px;color:#1a1a1a;transform:scaleX(0.9844);">0.000</span>
<span class="t h" style="left:866.72px;top:911.00px;font-size:16px;color:#1a1a1a;transform:scaleX(0.9840);">1.000</span>
<span class="t h" style="left:915.40px;top:911.00px;font-size:16px;color:#1a1a1a;transform:scaleX(0.9672);">Validée</span>
<span class="t h" style="left:1031.40px;top:911.00px;font-size:16px;color:#1a1a1a;transform:scaleX(1.0037);">6479</span>
<span class="t h" style="left:1149.40px;top:911.00px;font-size:16px;color:#1a1a1a;transform:scaleX(0.9911);">000001</span>
<span class="t h" style="left:1317.40px;top:911.00px;font-size:16px;color:#1a1a1a;transform:scaleX(0.9911);">000001</span>
<div style="left:1563px;top:895px;width:186px;height:50px;background:#f0f0f0;border-top:1px solid #fff;border-left:1px solid #fff;border-right:1px solid #696969;border-bottom:1px solid #696969;"><div style="left:0;top:0;width:184px;height:48px;border-top:1px solid #e3e3e3;border-left:1px solid #e3e3e3;border-right:1px solid #a0a0a0;border-bottom:1px solid #a0a0a0"></div></div>
<div style="left:65px;top:451px;width:1px;height:496px;background:#c6c6c6"></div>
<div style="left:43px;top:984px;width:1724px;height:1px;background:#c8c8c8"></div>
<div style="left:43px;top:985px;width:1724px;height:36px;background:#f0f0f0;"></div>
<div style="left:492px;top:991px;width:152px;height:24px;background:#fff;border:1px solid #cccccc;"></div>
<span class="t h" style="left:628.25px;top:997.20px;font-size:11.1px;color:#1a1a1a;">86</span>
<div style="left:646px;top:991px;width:152px;height:24px;background:#fff;border:1px solid #cccccc;"></div>
<span class="t h" style="left:788.60px;top:997.20px;font-size:11.1px;color:#1a1a1a;">2</span>
<div style="left:800px;top:991px;width:110px;height:24px;background:#fff;border:1px solid #cccccc;"></div>
<span class="t h" style="left:894.25px;top:997.20px;font-size:11.1px;color:#1a1a1a;">84</span>
</body></html>
